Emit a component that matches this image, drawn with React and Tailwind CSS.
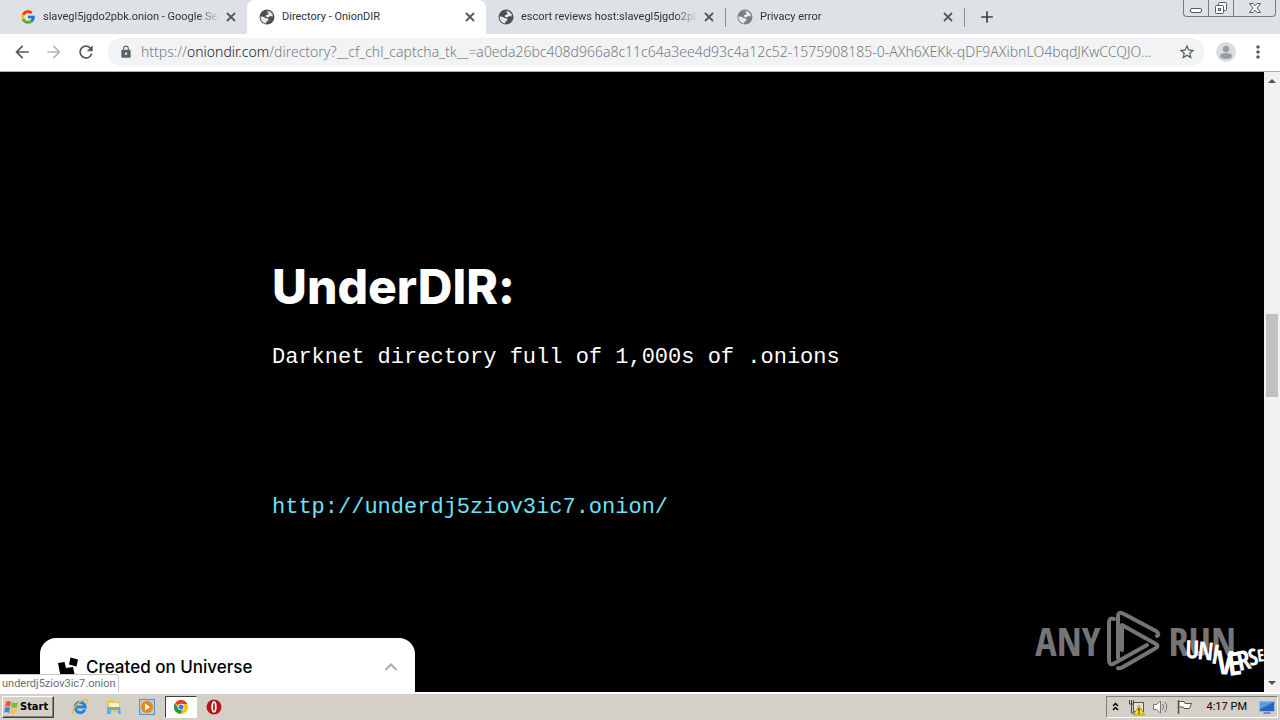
import React from "react";
import {
  MdArrowBack,
  MdArrowForward,
  MdRefresh,
  MdLock,
  MdStarBorder,
  MdMoreVert,
  MdAdd,
} from "react-icons/md";
import { FcGoogle } from "react-icons/fc";

const tabs = [
  { title: "slavegl5jgdo2pbk.onion - Google Search", kind: "google" },
  { title: "Directory - OnionDIR", kind: "globe", active: true },
  { title: "escort reviews host:slavegl5jgdo2pbk.onion", kind: "globe" },
  { title: "Privacy error", kind: "faded", divider: true },
];

function Globe({ className }) {
  return (
    <svg width="16" height="16" viewBox="0 0 16 16" className={className}>
      <circle cx="8" cy="8" r="7.500" fill="currentColor" />
      <path d="M7.500 2.500l3-.3 3.200 3-.2 2.300-2.500-.5-1.500 1.500-3-1 .8-1.500 2-.5.200-1.500z" fill="#e8eaed" />
      <path d="M1.500 7.500l3 .3 2 1.200 2.500.5.500 2-2 1-.5 2C4 14 1.500 11.500 1.500 7.500z" fill="#e8eaed" />
    </svg>
  );
}

function Tab({ tab }) {
  return (
    <div
      className={
        "relative flex w-[239px] shrink items-center pl-3 pr-2 " +
        (tab.active ? "rounded-t-lg bg-white" : "")
      }
    >
      {tab.kind === "google" ? (
        <FcGoogle className="size-4 shrink-0" />
      ) : (
        <Globe className={"shrink-0 " + (tab.kind === "faded" ? "text-[#7c7f82]" : "text-[#4d5053]")} />
      )}
      <button
        className={
          "ml-[7px] min-w-0 flex-1 overflow-hidden text-left whitespace-nowrap text-[11px] leading-4 text-[#303338] " +
          (tab.active ? "" : "[mask-image:linear-gradient(to_right,black_88%,transparent)]")
        }
      >
        {tab.title}
      </button>
      <button aria-label="Close tab" className="ml-1 grid size-4 shrink-0 place-items-center text-[#55585c]">
        <svg width="10" height="10" viewBox="0 0 10 10" stroke="currentColor" strokeWidth="1.800">
          <path d="M1 1l8 8M9 1l-8 8" />
        </svg>
      </button>
      {tab.divider && <span className="absolute top-2 left-0 h-[19px] w-px bg-[#8a8d93]" />}
    </div>
  );
}

function WindowButtons() {
  return (
    <div className="ml-auto mr-1 flex h-[17px] self-start overflow-hidden rounded-b border border-t-0 border-[#777b84] text-[#555961]">
      <button aria-label="Minimize" className="grid w-[25px] place-items-center border-r border-[#777b84]">
        <svg width="14" height="14" viewBox="0 0 14 14" fill="white" stroke="currentColor">
          <rect x="1.500" y="7.500" width="11" height="4" rx="1.500" />
        </svg>
      </button>
      <button aria-label="Restore" className="grid w-[25px] place-items-center border-r border-[#777b84]">
        <svg width="14" height="14" viewBox="0 0 14 14" fill="white" stroke="currentColor">
          <rect x="4.500" y="1.500" width="8" height="8" rx="1" />
          <rect x="1.500" y="4.500" width="8" height="8" rx="1" />
          <rect x="4.500" y="7.500" width="2" height="2" />
        </svg>
      </button>
      <button aria-label="Close" className="grid w-[41px] place-items-center">
        <svg width="14" height="12" viewBox="0 0 14 12" fill="white" stroke="currentColor">
          <path d="M1.500 1.500h3.500l2 2.300 2-2.300h3.500L9 6l3.500 4.500H9L7 8.200 5 10.500H1.500L5 6z" />
        </svg>
      </button>
    </div>
  );
}

function AnyRunMark() {
  return (
    <div className="flex items-center font-['Open_Sans_Condensed','Open_Sans',sans-serif] text-[40px] leading-none font-light text-[#757575]">
      <span>ANY</span>
      <svg width="56" height="62" viewBox="0 0 56 62" fill="none" stroke="currentColor" strokeWidth="4" strokeLinejoin="round" strokeLinecap="round" className="ml-1.5">
        <path d="M8 9Q3 7 3 13V50Q3 56 8 53.500L41 35" />
        <path d="M12 48V7Q12 1 17 3.500L50 21Q54 24 51 26" />
        <path d="M16 40V15L50 34Q53 36 50 38L17 57Q13 59 12 58" />
      </svg>
      <span className="ml-1.5">RUN</span>
    </div>
  );
}

function UniverseMark() {
  return (
    <svg
      width="80"
      height="46"
      viewBox="0 0 80 46"
      fill="white"
      className="overflow-visible font-['Open_Sans_Condensed','Open_Sans',sans-serif] font-bold"
      aria-label="Universe"
    >
      <text x="1" y="22" fontSize="25" transform="rotate(2 1 22)">U</text>
      <text x="13" y="23" fontSize="25" transform="rotate(6 13 23)">N</text>
      <text x="26" y="27" fontSize="27" transform="rotate(10 26 27)">I</text>
      <text x="32" y="38" fontSize="33" transform="rotate(2 32 38)">V</text>
      <text x="45" y="40" fontSize="32" transform="rotate(-8 45 40)">E</text>
      <text x="55" y="35" fontSize="27" transform="rotate(-12 55 35)">R</text>
      <text x="66" y="30" fontSize="23" transform="rotate(-12 66 30)">S</text>
      <text x="74" y="26" fontSize="17" transform="rotate(-8 74 26)">E</text>
    </svg>
  );
}

function StartFlag() {
  return (
    <svg width="17" height="17" viewBox="0 0 17 17">
      <path d="M3 3q3-2 5 0L7 8Q5 6 2 8z" fill="#e8582c" />
      <path d="M9 3q3 2 6 0l-1 5q-3 2-6 0z" fill="#7dbb42" />
      <path d="M2 9q3-2 5 0l-1 5q-3-2-5 0z" fill="#3c86d8" />
      <path d="M8 9q3 2 6 0l-1 5q-3 2-6 0z" fill="#f8c734" />
    </svg>
  );
}

function Taskbar() {
  return (
    <footer className="flex h-7 shrink-0 items-center border-t-2 border-white bg-[#d4d0c8] pl-0.5 pr-0.5">
      <button className="flex h-[22px] w-[52px] items-center border border-t-white border-l-white border-r-[#404040] border-b-[#404040] font-['DejaVu_Sans_Condensed',sans-serif] text-[11px] font-bold text-black shadow-[inset_-1px_-1px_0_#808080]">
        <StartFlag />
        <span>Start</span>
      </button>
      <div className="ml-[9px] flex items-center">
        <button aria-label="Internet Explorer" className="grid h-[22px] w-[34px] place-items-center">
          <svg width="18" height="18" viewBox="0 0 18 18" fill="none">
            <path d="M13.800 11.500A5 5.200 0 1 1 14.200 9H5" stroke="#2484da" strokeWidth="3" />
            <path d="M3 16C-1 15 6 3 14 1.500c3-.5 3 2 2 4" stroke="#e9b93c" strokeWidth="1.400" />
          </svg>
        </button>
        <button aria-label="Explorer" className="grid h-[22px] w-[33px] place-items-center">
          <svg width="18" height="18" viewBox="0 0 18 18">
            <path d="M2 2h5l1 2h7v10H2z" fill="#e9c75c" />
            <path d="M4 5h10v5H4z" fill="#fff3ae" />
            <path d="M2 9h13l1 7h-3v-4H6v4H2z" fill="#62b0dc" />
          </svg>
        </button>
        <button aria-label="Media Player" className="grid h-[22px] w-[34px] place-items-center">
          <svg width="16" height="16" viewBox="0 0 16 16">
            <rect x=".5" y=".5" width="15" height="15" fill="#a9cdea" stroke="#5794c8" />
            <circle cx="8" cy="8" r="6" fill="#f38414" />
            <path d="M6 4.500v7l5-3.500z" fill="white" />
          </svg>
        </button>
        <button
          aria-label="Chrome"
          className="ml-px grid h-[22px] w-8 place-items-center border border-t-[#404040] border-l-[#404040] border-r-white border-b-white bg-white"
        >
          <svg width="14" height="14" viewBox="1 1 14 14">
            <circle cx="8" cy="8" r="7" fill="#fbc116" />
            <path d="M8 8L2 4.300A7 7 0 0 1 14.300 5H8z" fill="#e33b2e" />
            <path d="M2 4.300A7 7 0 0 0 7.500 15L10 9.500 5 9z" fill="#229a4a" />
            <circle cx="8" cy="8" r="3.300" fill="white" />
            <circle cx="8" cy="8" r="2.600" fill="#3c7ee8" />
          </svg>
        </button>
        <button aria-label="Opera" className="grid h-[22px] w-[34px] place-items-center">
          <svg width="16" height="16" viewBox="0 0 16 16">
            <circle cx="8" cy="8" r="7.500" fill="#b81318" />
            <ellipse cx="8" cy="8" rx="1.800" ry="4.800" fill="#b81318" stroke="white" strokeWidth="1.700" />
          </svg>
        </button>
      </div>
      <div className="ml-auto flex h-[22px] w-[172px] items-center border border-t-[#808080] border-l-[#808080] border-r-white border-b-white pl-1 text-[11px] text-black">
        <svg width="9" height="12" viewBox="0 0 9 12" fill="none" stroke="black" strokeWidth="1.500">
          <path d="M2 5l2.500-2.500L7 5M2 9l2.500-2.500L7 9" />
        </svg>
        <svg width="17" height="17" viewBox="0 0 17 17" className="ml-2">
          <path d="M5.500 3.500h10v9h-10z" fill="#e4e2dd" stroke="#555" />
          <path d="M1.500 1v4h4V1M3.500 1v13h5" fill="none" stroke="#444" />
          <path d="M11 6l5.500 10h-11z" fill="#f8dc20" stroke="#a78300" strokeWidth=".7" />
          <path d="M11 9v3.500M11 13.500V15" stroke="#222" strokeWidth="1.300" />
        </svg>
        <svg width="17" height="16" viewBox="0 0 17 16" fill="white" stroke="#777" className="ml-[7px]">
          <path d="M1.500 5.500h3L8.500 2v12l-4-3.500h-3z" />
          <path d="M10.500 5q2 3 0 6M13 3q3.500 5 0 10" fill="none" />
        </svg>
        <svg width="17" height="16" viewBox="0 0 17 16" fill="white" stroke="#555" className="ml-[7px]">
          <path d="M2.500 1v14" strokeWidth="1.500" />
          <path d="M3 2.500h5l1 2h6.500l-2 5H8l-1-1.500H3z" />
        </svg>
        <span className="ml-auto">4:17 PM</span>
        <svg width="16" height="15" viewBox="0 0 16 15" className="ml-3 mr-0.5">
          <path d="M.5 1.500h15v10H.5z" fill="#2567bd" stroke="#8eb9e0" />
          <path d="M1 2h14L1 9z" fill="#5b9be2" />
          <path d="M5 12h6l1 2H4z" fill="#758fae" />
        </svg>
      </div>
    </footer>
  );
}

export default function App() {
  return (
    <div className="flex h-screen flex-col overflow-hidden bg-black font-['Roboto',sans-serif]">
      <header className="shrink-0 border-b border-[#a9abad] bg-white">
        <nav className="flex h-[34px] bg-[#dee1e6] pl-2">
          {tabs.map((tab) => (
            <Tab key={tab.title} tab={tab} />
          ))}
          <span className="mt-2 h-[19px] w-px bg-[#8a8d93]" />
          <button aria-label="New tab" className="ml-3 grid place-items-center text-[#3c4043]">
            <MdAdd className="size-5" />
          </button>
          <WindowButtons />
        </nav>
        <div className="mb-px flex h-9 items-center px-3">
          <button aria-label="Back" className="text-[#54575b]">
            <MdArrowBack className="size-5" />
          </button>
          <button aria-label="Forward" className="ml-3 text-[#b5b7b9]">
            <MdArrowForward className="size-5" />
          </button>
          <button aria-label="Reload" className="ml-3 text-[#54575b]">
            <MdRefresh className="size-5" />
          </button>
          <div className="ml-3 flex h-7 min-w-0 flex-1 items-center rounded-full bg-[#f1f3f4] pl-[11px] pr-2">
            <MdLock className="size-[14px] shrink-0 text-[#5f6368]" />
            <a
              href="https://oniondir.com/directory"
              className="ml-2 min-w-0 flex-1 overflow-hidden whitespace-nowrap font-['Noto_Sans',sans-serif] text-[14px] leading-5 font-light text-[#777b7f]"
            >
              https://<span className="text-[#202124]">oniondir.com</span>
              /directory?__cf_chl_captcha_tk__=a0eda26bc408d966a8c11c64a3ee4d93c4a12c52-1575908185-0-AXh6XEKk-qDF9AXibnLO4bqdJKwCCQJO...
            </a>
            <button aria-label="Bookmark" className="ml-2 shrink-0 text-[#54575b]">
              <MdStarBorder className="size-[18px]" />
            </button>
          </div>
          <button aria-label="Profile" className="ml-3 overflow-hidden rounded-full bg-[#dadcde]">
            <svg width="20" height="20" viewBox="0 0 20 20" fill="#9a9da0">
              <circle cx="10" cy="7" r="3.200" />
              <path d="M4 14q0-3 6-3t6 3-6 3-6-3z" />
            </svg>
          </button>
          <button aria-label="Menu" className="ml-3 text-[#54575b]">
            <MdMoreVert className="size-5" />
          </button>
        </div>
      </header>

      <div className="flex min-h-0 flex-1">
        <main className="relative min-w-0 flex-1 overflow-hidden bg-black">
          <div className="pl-[272px] pt-[185px]">
            <h1 className="font-['Inter',sans-serif] text-[48px] leading-[60px] font-extrabold text-white [font-feature-settings:'calt'_0]">
              UnderDIR:
            </h1>
            <p className="mt-[26px] font-['Liberation_Mono',monospace] text-[22px] leading-[30px] text-white">
              Darknet directory full of 1,000s of .onions
            </p>
            <a
              href="http://underdj5ziov3ic7.onion/"
              className="mt-[120px] block w-fit font-['Liberation_Mono',monospace] text-[22px] leading-[30px] text-[#6fe0f5]"
            >
              http://underdj5ziov3ic7.onion/
            </a>
          </div>

          <div className="absolute right-7 bottom-5">
            <AnyRunMark />
          </div>
          <div className="absolute right-0 bottom-2.5">
            <UniverseMark />
          </div>

          <button className="absolute bottom-0 left-10 flex h-[54px] w-[375px] items-center rounded-t-2xl bg-white pl-[18px] pr-[17px] pt-1 font-['Inter',sans-serif] text-[17px] leading-5 font-medium text-black">
            <svg width="20" height="20" viewBox="0 0 20 20">
              <path d="M12.500 0.500l7.500 2-1.500 7-7.500-2z" />
              <path d="M0 6l6.500-1 1.500 6 7-1 1.500 7-14 2z" />
            </svg>
            <span className="ml-2">Created on Universe</span>
            <svg width="14" height="10" viewBox="0 0 14 10" fill="none" stroke="#aaa" strokeWidth="2" className="ml-auto">
              <path d="M1.500 8L7 2.500 12.500 8" />
            </svg>
          </button>
          <div className="absolute bottom-0 left-0 rounded-tr border-t border-r border-[#c8c8c8] bg-white px-0.5 text-[11px] leading-[17px] text-[#6b6e72]">
            underdj5ziov3ic7.onion
          </div>
        </main>
        <aside className="flex w-4 shrink-0 flex-col items-center bg-[#f1f1f1]">
          <svg width="16" height="17" viewBox="0 0 16 17" fill="#505050">
            <path d="M4 11l4-4 4 4z" />
          </svg>
          <div className="mt-[225px] h-[83px] w-3 bg-[#c1c1c1]" />
          <svg width="16" height="17" viewBox="0 0 16 17" fill="#505050" className="mt-auto">
            <path d="M4 6l4 4 4-4z" />
          </svg>
        </aside>
      </div>
      <Taskbar />
    </div>
  );
}
